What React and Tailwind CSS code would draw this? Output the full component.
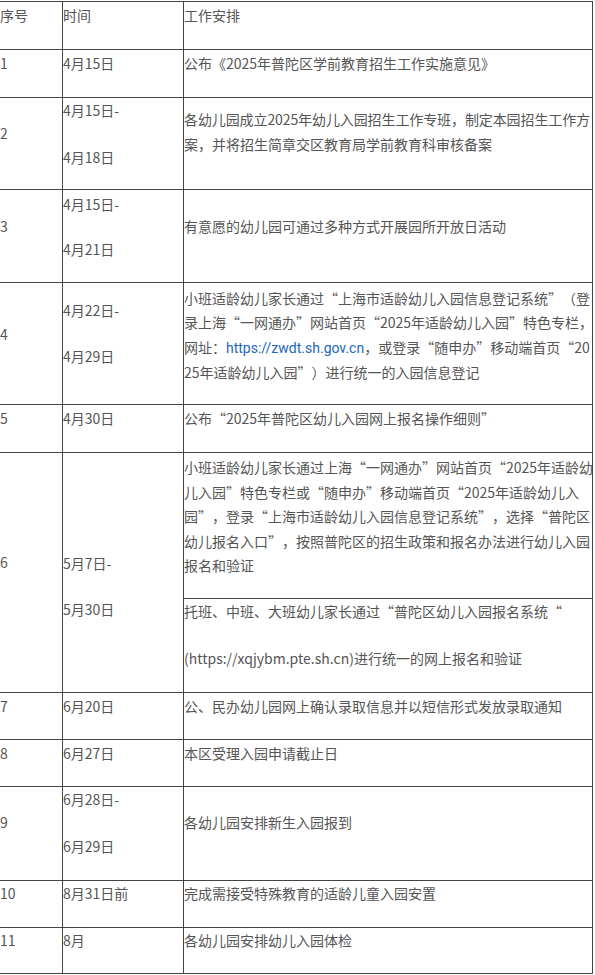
import React from "react";

function L({ children, className = "" }) {
  return <div className={"whitespace-nowrap " + className}>{children}</div>;
}

export default function App() {
  return (
    <div
      lang="zh-CN"
      className="w-[595px] h-[975px] bg-white overflow-hidden font-['Noto_Sans_CJK_SC','Noto_Sans',sans-serif] text-[14px] leading-[24px] text-[#555] [text-spacing-trim:space-all]"
    >
      <div className="mt-px ml-[-1px] w-[594px] border-t border-l border-[#444]">
        {/* header */}
        <div className="flex h-[48px] border-b border-[#444]">
          <div className="w-[63px] shrink-0 border-r border-[#444] pt-[1px]">序号</div>
          <div className="w-[121px] shrink-0 border-r border-[#444] pt-[1px]">时间</div>
          <div className="w-[409px] shrink-0 border-r border-[#444] pt-[1px]">工作安排</div>
        </div>
        {/* 1 */}
        <div className="flex h-[48px] border-b border-[#444]">
          <div className="w-[63px] shrink-0 border-r border-[#444] pt-[1px]">1</div>
          <div className="w-[121px] shrink-0 border-r border-[#444] pt-[1px]">4月15日</div>
          <div className="w-[409px] shrink-0 border-r border-[#444] pt-[1px] overflow-hidden">
            <L>公布《2025年普陀区学前教育招生工作实施意见》</L>
          </div>
        </div>
        {/* 2 */}
        <div className="flex h-[92px] border-b border-[#444]">
          <div className="w-[63px] shrink-0 border-r border-[#444] pt-[23px]">2</div>
          <div className="w-[121px] shrink-0 border-r border-[#444] pt-0">
            <L>4月15日-</L>
            <L className="mt-[23px]">4月18日</L>
          </div>
          <div className="w-[409px] shrink-0 border-r border-[#444] pt-[9px] overflow-hidden leading-[24.5px]">
            <L className="tracking-[-0.1px]">各幼儿园成立2025年幼儿入园招生工作专班，制定本园招生工作方</L>
            <L>案，并将招生简章交区教育局学前教育科审核备案</L>
          </div>
        </div>
        {/* 3 */}
        <div className="flex h-[93px] border-b border-[#444]">
          <div className="w-[63px] shrink-0 border-r border-[#444] pt-[24px]">3</div>
          <div className="w-[121px] shrink-0 border-r border-[#444] pt-[2px]">
            <L>4月15日-</L>
            <L className="mt-[21px]">4月21日</L>
          </div>
          <div className="w-[409px] shrink-0 border-r border-[#444] pt-[24px] overflow-hidden">
            <L>有意愿的幼儿园可通过多种方式开展园所开放日活动</L>
          </div>
        </div>
        {/* 4 */}
        <div className="flex h-[122px] border-b border-[#444]">
          <div className="w-[63px] shrink-0 border-r border-[#444] pt-[39px]">4</div>
          <div className="w-[121px] shrink-0 border-r border-[#444] pt-[15px]">
            <L>4月22日-</L>
            <L className="mt-[22px]">4月29日</L>
          </div>
          <div className="w-[409px] shrink-0 border-r border-[#444] pt-[3px] overflow-hidden leading-[24.4px]">
            <L>小班适龄幼儿家长通过“上海市适龄幼儿入园信息登记系统”（登</L>
            <L>录上海“一网通办”网站首页“2025年适龄幼儿入园”特色专栏，</L>
            <L>
              网址：<span className="text-[#2266bb] font-['Roboto',sans-serif]">https://zwdt.sh.gov.cn</span>，或登录“随申办”移动端首页“20
            </L>
            <L>25年适龄幼儿入园”）进行统一的入园信息登记</L>
          </div>
        </div>
        {/* 5 */}
        <div className="flex h-[48px] border-b border-[#444]">
          <div className="w-[63px] shrink-0 border-r border-[#444] pt-[1px]">5</div>
          <div className="w-[121px] shrink-0 border-r border-[#444] pt-[1px]">4月30日</div>
          <div className="w-[409px] shrink-0 border-r border-[#444] pt-[1px] overflow-hidden">
            <L>公布“2025年普陀区幼儿入园网上报名操作细则”</L>
          </div>
        </div>
        {/* 6 */}
        <div className="flex h-[240px] border-b border-[#444]">
          <div className="w-[63px] shrink-0 border-r border-[#444] pt-[97px]">6</div>
          <div className="w-[121px] shrink-0 border-r border-[#444] pt-[98px]">
            <L>5月7日-</L>
            <L className="mt-[22px]">5月30日</L>
          </div>
          <div className="w-[409px] shrink-0 border-r border-[#444] flex flex-col overflow-hidden">
            <div className="h-[146px] border-b border-[#444] pt-[2px] leading-[24.5px]">
              <L>小班适龄幼儿家长通过上海“一网通办”网站首页“2025年适龄幼</L>
              <L>儿入园”特色专栏或“随申办”移动端首页“2025年适龄幼儿入</L>
              <L>园”，登录“上海市适龄幼儿入园信息登记系统”，选择“普陀区</L>
              <L>幼儿报名入口”，按照普陀区的招生政策和报名办法进行幼儿入园</L>
              <L>报名和验证</L>
            </div>
            <div className="pt-0">
              <L>托班、中班、大班幼儿家长通过“普陀区幼儿入园报名系统“</L>
              <L className="mt-[23px]">(https://xqjybm.pte.sh.cn)进行统一的网上报名和验证</L>
            </div>
          </div>
        </div>
        {/* 7 */}
        <div className="flex h-[47px] border-b border-[#444]">
          <div className="w-[63px] shrink-0 border-r border-[#444] pt-[1px]">7</div>
          <div className="w-[121px] shrink-0 border-r border-[#444] pt-[1px]">6月20日</div>
          <div className="w-[409px] shrink-0 border-r border-[#444] pt-[1px] overflow-hidden">
            <L>公、民办幼儿园网上确认录取信息并以短信形式发放录取通知</L>
          </div>
        </div>
        {/* 8 */}
        <div className="flex h-[47px] border-b border-[#444]">
          <div className="w-[63px] shrink-0 border-r border-[#444] pt-[1px]">8</div>
          <div className="w-[121px] shrink-0 border-r border-[#444] pt-[1px]">6月27日</div>
          <div className="w-[409px] shrink-0 border-r border-[#444] pt-[1px] overflow-hidden">
            <L>本区受理入园申请截止日</L>
          </div>
        </div>
        {/* 9 */}
        <div className="flex h-[94px] border-b border-[#444]">
          <div className="w-[63px] shrink-0 border-r border-[#444] pt-[23px]">9</div>
          <div className="w-[121px] shrink-0 border-r border-[#444] pt-0">
            <L>6月28日-</L>
            <L className="mt-[23px]">6月29日</L>
          </div>
          <div className="w-[409px] shrink-0 border-r border-[#444] pt-[23px] overflow-hidden">
            <L>各幼儿园安排新生入园报到</L>
          </div>
        </div>
        {/* 10 */}
        <div className="flex h-[47px] border-b border-[#444]">
          <div className="w-[63px] shrink-0 border-r border-[#444] pt-0">10</div>
          <div className="w-[121px] shrink-0 border-r border-[#444] pt-0">8月31日前</div>
          <div className="w-[409px] shrink-0 border-r border-[#444] pt-0 overflow-hidden">
            <L>完成需接受特殊教育的适龄儿童入园安置</L>
          </div>
        </div>
        {/* 11 */}
        <div className="flex h-[46px] border-b border-[#444]">
          <div className="w-[63px] shrink-0 border-r border-[#444] pt-0">11</div>
          <div className="w-[121px] shrink-0 border-r border-[#444] pt-0">8月</div>
          <div className="w-[409px] shrink-0 border-r border-[#444] pt-0 overflow-hidden">
            <L>各幼儿园安排幼儿入园体检</L>
          </div>
        </div>
      </div>
    </div>
  );
}
